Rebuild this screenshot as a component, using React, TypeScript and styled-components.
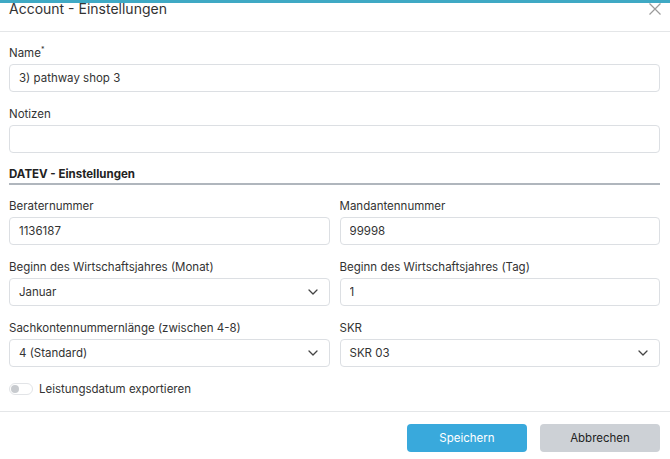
import React from 'react'
import styled, { createGlobalStyle } from 'styled-components'

const GlobalStyle = createGlobalStyle`
    html, body {
        margin: 0;
        padding: 0;
        background: #ffffff;
        font-family: Inter, "Noto Sans", "Liberation Sans", sans-serif;
        color: #333333;
    }
    * { box-sizing: border-box; }
`

const Modal = styled.div`
    width: 670px;
    height: 459px;
    display: flex;
    flex-direction: column;
    background: #fff;
`

const Header = styled.div`
    position: relative;
    height: 32px;
    display: flex;
    justify-content: space-between;
    align-items: flex-start;
    padding: 0 9px;
    border-bottom: 1px solid #e4e6e8;
    &::before {
        content: '';
        position: absolute;
        left: 0;
        right: 0;
        top: 0;
        height: 3px;
        background: #3fa9c4;
    }
`

const Title = styled.div`
    font-size: 14px;
    line-height: 18px;
    color: #333;
`

const Close = styled.button`
    border: none;
    background: none;
    padding: 0;
    margin-top: 3px;
    width: 12px;
    height: 12px;
    display: flex;
    cursor: pointer;
`

const Body = styled.div`
    padding: 13px 10px 0 9px;
    display: flex;
    flex-direction: column;
    gap: 14px;
    flex: 1;
`

const Row = styled.div`
    display: grid;
    grid-template-columns: 1fr 1fr;
    gap: 10px;
`

const Field = styled.div`
    display: flex;
    flex-direction: column;
    gap: 3px;
`

const Label = styled.label`
    font-size: 11.5px;
    line-height: 16px;
    color: #333;
    sup {
        font-size: 7px;
        vertical-align: top;
        line-height: 10px;
    }
`

const Input = styled.input`
    height: 28px;
    width: 100%;
    border: 1px solid #dcdfe3;
    border-radius: 4px;
    padding: 0 9px;
    font-family: inherit;
    font-size: 11.5px;
    color: #333;
    outline: none;
`

const Select = styled.div`
    height: 28px;
    border: 1px solid #dcdfe3;
    border-radius: 4px;
    padding: 0 11px 0 9px;
    display: flex;
    align-items: center;
    justify-content: space-between;
    font-size: 11.5px;
    color: #333;
`

const Section = styled.div`
    font-size: 11.5px;
    font-weight: 700;
    line-height: 16px;
    color: #222;
    padding-bottom: 1px;
    border-bottom: 2px solid #b0b6bd;
    margin-top: -1px;
    margin-bottom: -1px;
`

const ToggleRow = styled.div`
    display: flex;
    align-items: center;
    gap: 6px;
    height: 16px;
    font-size: 11.5px;
`

const Track = styled.span`
    width: 24px;
    height: 12px;
    border: 1px solid #e2e4e7;
    border-radius: 6px;
    padding: 1px;
    display: flex;
    align-items: center;
`

const Knob = styled.span`
    width: 8px;
    height: 8px;
    border-radius: 50%;
    background: #c8cbcf;
`

const Footer = styled.div`
    height: 48px;
    border-top: 1px solid #e4e6e8;
    display: flex;
    justify-content: flex-end;
    align-items: flex-start;
    gap: 13px;
    padding: 12px 10px 0 0;
`

const Button = styled.button<{ $primary?: boolean }>`
    width: 120px;
    height: 28px;
    border: none;
    border-radius: 4px;
    font-family: inherit;
    font-size: 11.5px;
    background: ${p => (p.$primary ? '#39a9dc' : '#cdd1d6')};
    color: ${p => (p.$primary ? '#ffffff' : '#222222')};
    cursor: pointer;
`

const Chevron = () => (
    <svg width="10" height="6" viewBox="0 0 10 6" fill="none">
        <path d="M1 1l4 4 4-4" stroke="#444" strokeWidth="1.3" strokeLinecap="round" strokeLinejoin="round" />
    </svg>
)

const App: React.FunctionComponent = () => {
    return (
        <>
            <GlobalStyle />
            <Modal>
                <Header>
                    <Title>Account - Einstellungen</Title>
                    <Close aria-label="Schließen">
                        <svg width="12" height="12" viewBox="0 0 12 12">
                            <path d="M0.5 0.5l11 11M11.5 0.5l-11 11" stroke="#9a9a9a" strokeWidth="1.2" />
                        </svg>
                    </Close>
                </Header>
                <Body>
                    <Field>
                        <Label>Name<sup>*</sup></Label>
                        <Input defaultValue="3) pathway shop 3" />
                    </Field>
                    <Field>
                        <Label>Notizen</Label>
                        <Input defaultValue="" />
                    </Field>
                    <Section>DATEV - Einstellungen</Section>
                    <Row>
                        <Field>
                            <Label>Beraternummer</Label>
                            <Input defaultValue="1136187" />
                        </Field>
                        <Field>
                            <Label>Mandantennummer</Label>
                            <Input defaultValue="99998" />
                        </Field>
                    </Row>
                    <Row>
                        <Field>
                            <Label>Beginn des Wirtschaftsjahres (Monat)</Label>
                            <Select>Januar<Chevron /></Select>
                        </Field>
                        <Field>
                            <Label>Beginn des Wirtschaftsjahres (Tag)</Label>
                            <Input defaultValue="1" />
                        </Field>
                    </Row>
                    <Row>
                        <Field>
                            <Label>Sachkontennummernlänge (zwischen 4-8)</Label>
                            <Select>4 (Standard)<Chevron /></Select>
                        </Field>
                        <Field>
                            <Label>SKR</Label>
                            <Select>SKR 03<Chevron /></Select>
                        </Field>
                    </Row>
                    <ToggleRow>
                        <Track><Knob /></Track>
                        Leistungsdatum exportieren
                    </ToggleRow>
                </Body>
                <Footer>
                    <Button $primary>Speichern</Button>
                    <Button>Abbrechen</Button>
                </Footer>
            </Modal>
        </>
    )
}

export default App
